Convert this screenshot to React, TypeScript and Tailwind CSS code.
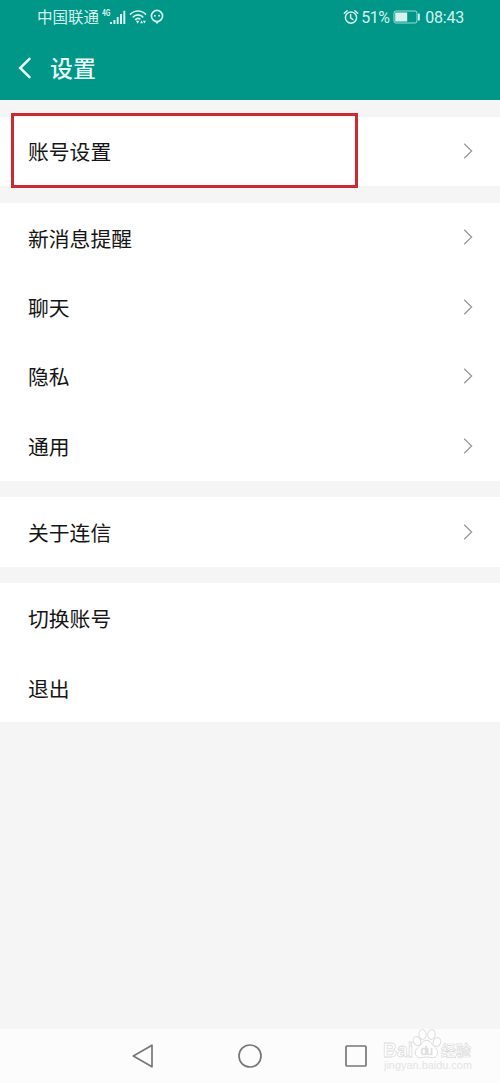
import React from "react";

type Item = { label: string; arrow?: boolean; highlight?: boolean };

const groups: Item[][] = [
  [{ label: "账号设置", arrow: true, highlight: true }],
  [
    { label: "新消息提醒", arrow: true },
    { label: "聊天", arrow: true },
    { label: "隐私", arrow: true },
    { label: "通用", arrow: true },
  ],
  [{ label: "关于连信", arrow: true }],
  [{ label: "切换账号" }, { label: "退出" }],
];

const StatusBar = () => (
  <div className="flex h-[34px] items-center pl-[37px] pr-[36px] text-[#d5f3ee]">
    <span className="pt-[3px] text-[15.5px] leading-none">中国联通</span>
    {/* signal */}
    <div className="ml-[3px] flex h-4 items-start">
      <span className="inline-block w-[9px] origin-top-left scale-x-75 font-['Roboto'] text-[9px] font-bold leading-none">4G</span>
      <svg className="-ml-px h-4 w-4" viewBox="0 0 16 16" fill="currentColor">
        <rect x="0" y="13" width="2" height="2" />
        <rect x="3.4" y="11" width="2" height="4" />
        <rect x="6.7" y="8" width="2" height="7" />
        <rect x="10" y="5" width="2" height="10" />
        <rect x="13.3" y="1.7" width="2" height="13.3" />
      </svg>
    </div>
    {/* wifi */}
    <svg className="ml-[3px] h-4 w-[18px]" viewBox="0 0 18 16" fill="none" stroke="currentColor" strokeWidth="1.7">
      <path d="M1 5.6C5.5.8 12.5.8 17 5.6" />
      <path d="M3.7 8.3c3-3.2 7.6-3.2 10.6 0" />
      <path d="M6.2 10.8c1.6-1.7 3.8-1.7 5.2-.4" />
      <path d="M6.8 11.8h3.6l-1.8 3z" fill="currentColor" stroke="none" />
      <path d="M11 14.2l1.6-2.7 1.6 2.7zM13.8 11.8l1.6 2.7 1.6-2.7z" fill="currentColor" stroke="none" />
    </svg>
    {/* chat */}
    <svg className="ml-[3px] h-4 w-[14px]" viewBox="0 0 14 16" fill="none" stroke="currentColor">
      <circle cx="7" cy="7" r="5.6" strokeWidth="1.7" />
      <path d="M4.7 12.2h4.6L7 15.2z" fill="currentColor" stroke="none" />
      <circle cx="4.9" cy="6.8" r="1" fill="currentColor" stroke="none" />
      <circle cx="9.1" cy="6.8" r="1" fill="currentColor" stroke="none" />
    </svg>
    {/* alarm */}
    <svg className="ml-auto h-4 w-4" viewBox="0 0 16 16" fill="none" stroke="currentColor" strokeWidth="1.5" strokeLinecap="round">
      <circle cx="8" cy="8.6" r="5.6" />
      <path d="M1.3 4.3l2.8-2.5M14.7 4.3l-2.8-2.5M7.6 5.6v3.3l2.3 1.6" />
    </svg>
    <span className="ml-[2px] w-[29px] whitespace-nowrap pt-[2px] text-[16px] leading-none tracking-[-0.4px]">51%</span>
    <svg className="ml-[3px] h-[14px] w-[28px]" viewBox="0 0 28 14">
      <rect x="1" y="1" width="23" height="12" rx="2" fill="none" stroke="currentColor" strokeOpacity=".75" />
      <rect x="2.2" y="2.5" width="12" height="9" fill="currentColor" />
      <rect x="25" y="3.5" width="1.8" height="7" rx=".5" fill="currentColor" />
    </svg>
    <span className="ml-[4px] pt-[2px] text-[16px] leading-none tracking-[-0.2px]">08:43</span>
  </div>
);

const Row = ({ item }: { item: Item }) => (
  <div className="relative flex h-[69.44px] items-center justify-between pl-7 pr-[27px]">
    <span className="pt-[5px] text-[20.8px] leading-none text-[#161616]">{item.label}</span>
    {item.arrow && (
      <svg className="h-4 w-[10px]" viewBox="0 0 10 16" fill="none" stroke="#999999" strokeWidth="1.3">
        <path d="M1.2.8L8.6 8l-7.4 7.2" />
      </svg>
    )}
    {item.highlight && (
      <div className="absolute left-[11px] top-[-3.67px] h-[75px] w-[347px] border-3 border-[#cc2a33]" />
    )}
  </div>
);

const Watermark = () => (
  <div className="absolute left-[383px] top-0 h-[54px] w-[92px] font-['Liberation_Sans']">
    <svg className="h-full w-full" viewBox="0 0 92 54" fill="#ffffff" stroke="#dcdcdc">
      <ellipse cx="34" cy="12" rx="3.6" ry="4.6" transform="rotate(-25 34 12)" />
      <ellipse cx="39.5" cy="5.5" rx="3.6" ry="4.8" />
      <ellipse cx="48.5" cy="5.5" rx="3.6" ry="4.8" transform="rotate(10 48.5 5.5)" />
      <ellipse cx="54" cy="13" rx="3.6" ry="4.6" transform="rotate(20 54 13)" />
      <path d="M43.5 11.5c4.500 0 5 4 8 6.500 3 2.600 4 5 2.500 8.200-2 4-6.500 1.800-10.500 1.800s-8.500 2.200-10.500-1.800c-1.500-3.200-.5-5.600 2.500-8.200 3-2.500 3.500-6.500 8-6.500z" />
      <text x="0" y="27.5" fontSize="21" fontWeight="700" strokeWidth=".8" textLength="30" lengthAdjust="spacingAndGlyphs">Bai</text>
      <text x="37.500" y="25.500" fontSize="12" fill="#d9d9d9" strokeWidth=".3" textLength="12.500">du</text>
      <text x="58" y="27" fontSize="15" fontWeight="700" strokeWidth=".7" textLength="30" className="font-['Noto_Sans_CJK_SC']">经验</text>
      <text x="1" y="40" fontSize="10.500" fill="#e4e4e4" stroke="none" textLength="88" lengthAdjust="spacingAndGlyphs">jingyan.baidu.com</text>
    </svg>
  </div>
);

export default function App() {
  return (
    <div className="flex h-[1083px] w-[500px] flex-col overflow-hidden bg-[#f5f5f5] font-['Roboto','Noto_Sans_CJK_SC',sans-serif]">
      <header className="h-[100px] shrink-0 bg-[#009688]">
        <StatusBar />
        <div className="flex h-[67px] items-center pl-[18px] text-[#e8fcfa]">
          <svg className="h-[22px] w-[14px]" viewBox="0 0 14 22" fill="none" stroke="currentColor" strokeWidth="2.5" strokeLinecap="round">
            <path d="M11.5 1.8L2.2 11l9.3 9.2" />
          </svg>
          <h1 className="ml-[18px] pt-[5px] text-[22.9px] font-medium leading-none">设置</h1>
        </div>
      </header>

      <main className="flex flex-col gap-[16.67px] pt-[16.67px]">
        {groups.map((group) => (
          <section key={group[0].label} className="bg-white">
            {group.map((item) => (
              <Row key={item.label} item={item} />
            ))}
          </section>
        ))}
      </main>

      {/* system navigation */}
      <nav className="relative mt-auto flex h-[54px] shrink-0 items-center bg-[#fcfcfc] pl-[131px]">
        <svg className="h-[26px] w-[24px]" viewBox="0 0 24 26" fill="none" stroke="#777777" strokeWidth="1.7" strokeLinejoin="round">
          <path d="M21 2.2v21.600L2.300 13z" />
        </svg>
        <svg className="ml-[82px] h-[26px] w-[26px]" viewBox="0 0 26 26" fill="none" stroke="#777777" strokeWidth="1.7">
          <circle cx="13" cy="13" r="11" />
        </svg>
        <svg className="ml-[80px] h-[26px] w-[26px]" viewBox="0 0 26 26" fill="none" stroke="#777777" strokeWidth="1.7">
          <rect x="3" y="3" width="20" height="20" rx="1" />
        </svg>
        <Watermark />
      </nav>
    </div>
  );
}
